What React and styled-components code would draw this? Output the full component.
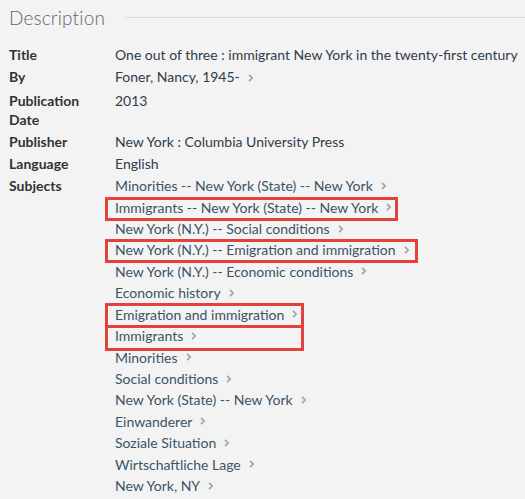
import React from "react";
import styled, { createGlobalStyle } from "styled-components";

const GlobalStyle = createGlobalStyle`
  html, body {
    margin: 0;
    padding: 0;
    background: #f3f3f3;
  }
  body {
    font-family: "Lato", "Open Sans", sans-serif;
    -webkit-font-smoothing: antialiased;
  }
`;

const fields = [
  { label: "Title", value: "One out of three : immigrant New York in the twenty-first century" },
  { label: "By", value: "Foner, Nancy, 1945-", link: true },
  { label: "Publication Date", value: "2013" },
  { label: "Publisher", value: "New York : Columbia University Press" },
  { label: "Language", value: "English" },
];

const subjects = [
  { text: "Minorities -- New York (State) -- New York" },
  { text: "Immigrants -- New York (State) -- New York", box: { top: 1, width: 293, height: 24 } },
  { text: "New York (N.Y.) -- Social conditions" },
  { text: "New York (N.Y.) -- Emigration and immigration", box: { top: 0, width: 313, height: 24 } },
  { text: "New York (N.Y.) -- Economic conditions" },
  { text: "Economic history" },
  { text: "Emigration and immigration", box: { top: -1, width: 199, height: 25 } },
  { text: "Immigrants", box: { top: 0, width: 199, height: 26 } },
  { text: "Minorities" },
  { text: "Social conditions" },
  { text: "New York (State) -- New York" },
  { text: "Einwanderer" },
  { text: "Soziale Situation" },
  { text: "Wirtschaftliche Lage" },
  { text: "New York, NY" },
];

const Chevron = () => (
  <ChevronIcon viewBox="0 0 8 12" aria-hidden="true">
    <path d="M2.2 2.2l3.8 3.8-3.8 3.8" fill="none" stroke="currentColor" strokeWidth="2" />
  </ChevronIcon>
);

const App = () => (
  <>
    <GlobalStyle />
    <Section>
      <Header>
        <HeaderTitle>Description</HeaderTitle>
        <HeaderRule />
      </Header>
      <Fields>
        {fields.map((f) => (
          <Field key={f.label} $link={f.link}>
            <Label>{f.label}</Label>
            <Value>
              {f.value}
              {f.link && <Chevron />}
            </Value>
          </Field>
        ))}
        <Field>
          <Label>Subjects</Label>
          <SubjectList>
            {subjects.map((s) => (
              <SubjectRow key={s.text} $box={s.box}>
                <SubjectLink>{s.text}</SubjectLink>
                <Chevron />
              </SubjectRow>
            ))}
          </SubjectList>
        </Field>
      </Fields>
    </Section>
  </>
);

const Section = styled.section`
  padding: 4px 0 0 9px;
`;

const Header = styled.div`
  display: flex;
  align-items: center;
  gap: 21px;
  height: 26px;
  margin-bottom: 15px;
`;

const HeaderTitle = styled.h2`
  margin: 0;
  font-size: 19px;
  font-weight: 300;
  color: #666;
  letter-spacing: 0.15px;
`;

const HeaderRule = styled.div`
  flex: 1;
  height: 1px;
  background: #dadada;
`;

const Fields = styled.div`
  display: flex;
  flex-direction: column;
  gap: 3px;
`;

const Field = styled.div`
  display: flex;
  font-size: 14px;
  line-height: 19px;
  margin-bottom: ${({ $link }) => ($link ? "2px" : "0")};
`;

const Label = styled.div`
  width: 96px;
  flex-shrink: 0;
  padding-right: 10px;
  font-weight: 700;
  color: #333;
`;

const Value = styled.div`
  color: #2e3c4c;
`;

const SubjectList = styled.div`
  display: flex;
  flex-direction: column;
  margin-top: -1px;
`;

const SubjectRow = styled.div`
  position: relative;
  display: flex;
  align-items: center;
  height: 21.43px;

  ${({ $box }) =>
    $box &&
    `
    &::after {
      content: "";
      position: absolute;
      left: -10px;
      top: ${$box.top}px;
      width: ${$box.width}px;
      height: ${$box.height}px;
      border: 3px solid #e2423b;
      box-sizing: border-box;
      pointer-events: none;
    }
  `}
`;

const SubjectLink = styled.span`
  color: #3a5366;
`;

const ChevronIcon = styled.svg`
  display: inline-block;
  vertical-align: -1px;
  width: 7px;
  height: 10px;
  margin-left: 7px;
  color: #9ba6a9;
  flex-shrink: 0;
`;

export default App;
